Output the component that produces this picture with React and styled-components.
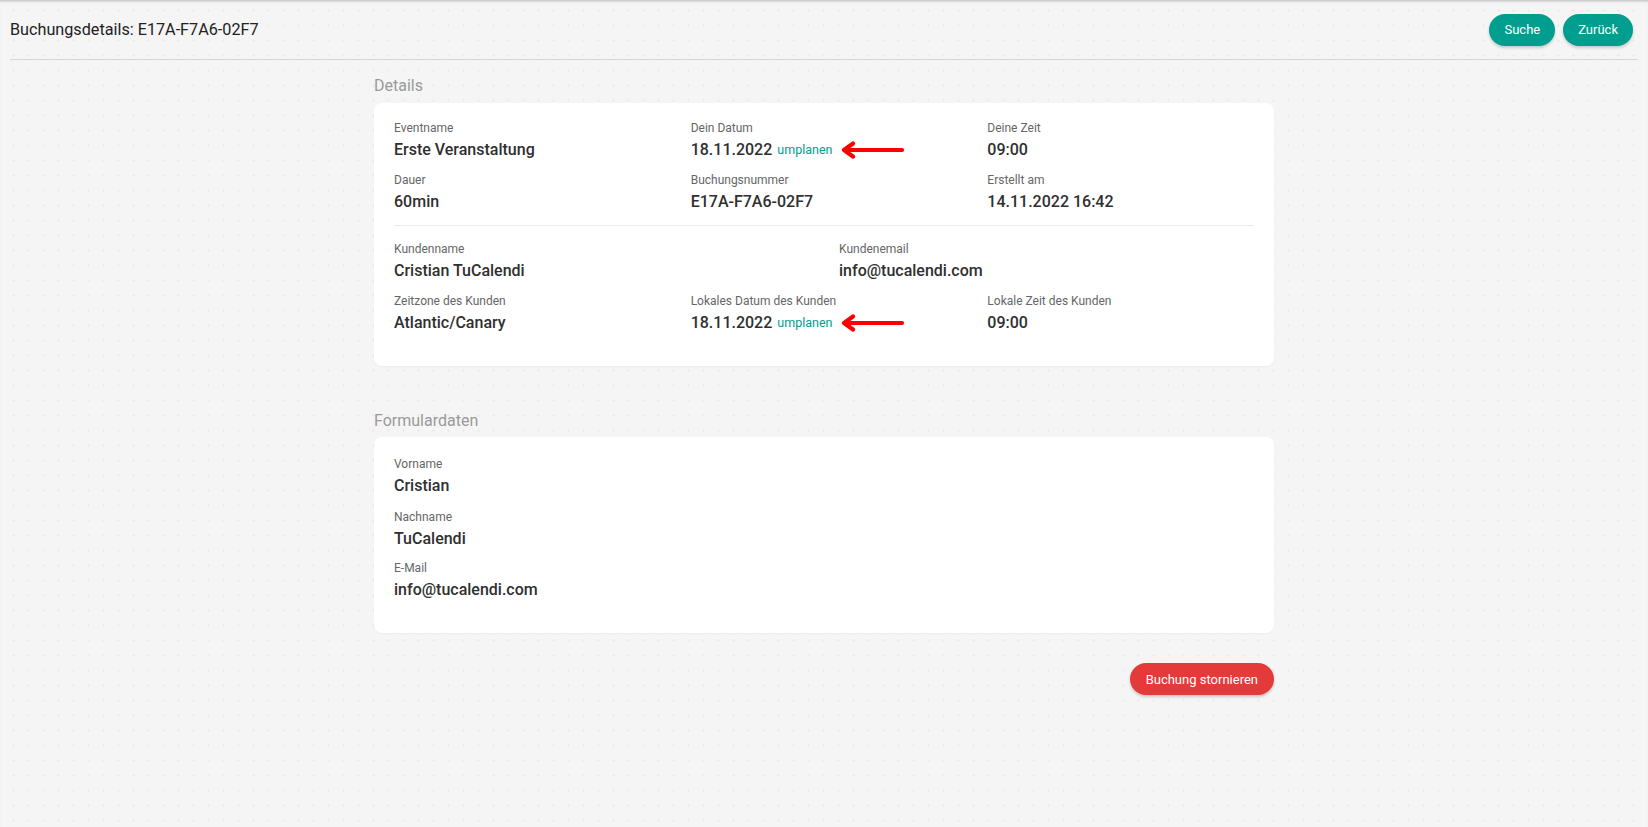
import React from "react";
import styled, { createGlobalStyle } from "styled-components";

const GlobalStyle = createGlobalStyle`
  html, body {
    margin: 0;
    padding: 0;
  }
  body {
    font-family: Roboto, "Liberation Sans", Arial, sans-serif;
    background-color: #f5f5f5;
    background-image: radial-gradient(circle, #ebebeb 1px, transparent 1.2px);
    background-size: 15px 15px;
    background-position: 6px 3px;
    color: #333;
    min-height: 827px;
  }
`;

const Page = styled.div`
  min-height: 827px;
  box-shadow: inset 0 3px 3px -2px rgba(0, 0, 0, 0.25);
  padding: 0 10px;
  box-sizing: border-box;
`;

const Header = styled.header`
  display: flex;
  justify-content: space-between;
  align-items: center;
  height: 60px;
  border-bottom: 1px solid #d6d6d6;
  box-sizing: border-box;
`;

const Title = styled.h1`
  margin: 0;
  font-size: 16.2px;
  font-weight: 400;
  color: #222;
`;

const Actions = styled.div`
  display: flex;
  gap: 8px;
  margin-right: 5px;
`;

const PillButton = styled.button`
  height: 32px;
  padding: 0 ${(p) => p.$px || 16}px;
  border: none;
  border-radius: 16px;
  background: ${(p) => p.$color || "#009e8e"};
  color: #fff;
  font-family: Roboto, "Liberation Sans", Arial, sans-serif;
  font-size: 13px;
  cursor: pointer;
  box-shadow: 0 2px 3px rgba(0, 0, 0, 0.18);
`;

const Main = styled.main`
  width: 900px;
  margin: 0 auto;
  padding-top: 16px;
`;

const SectionTitle = styled.h2`
  margin: ${(p) => p.$mt || 0}px 0 ${(p) => p.$mb || 10}px;
  font-size: 16px;
  font-weight: 400;
  color: #9a9a9a;
  line-height: 20px;
`;

const Card = styled.section`
  background: #fff;
  border-radius: 8px;
  padding: ${(p) => p.$pt || 17}px 20px ${(p) => p.$pb || 21}px;
  box-shadow: 0 1px 2px rgba(0, 0, 0, 0.04);
`;

const Row = styled.div`
  display: grid;
  grid-template-columns: repeat(${(p) => p.$cols || 3}, 1fr);
  margin: 0 -15px;
`;

const Field = styled.div`
  padding: 0 15px;
  margin-bottom: ${(p) => p.$mb ?? 12}px;
`;

const Label = styled.div`
  font-size: 12px;
  line-height: 16px;
  color: #666;
  margin-bottom: 3px;
`;

const Value = styled.div`
  display: flex;
  align-items: center;
  font-size: 16px;
  line-height: 21px;
  font-weight: 500;
  color: #2f2f2f;
`;

const Reschedule = styled.a`
  font-size: 12.5px;
  font-weight: 400;
  color: #009e8e;
  margin-left: 5px;
  text-decoration: none;
  cursor: pointer;
`;

const Arrow = styled.svg`
  margin-left: 9px;
  flex-shrink: 0;
`;

const Divider = styled.hr`
  border: none;
  border-top: 1px solid #ececec;
  margin: 1px 0 15px;
`;

const Footer = styled.div`
  display: flex;
  justify-content: flex-end;
  margin-top: 30px;
`;

const RedArrow = () => (
  <Arrow width="64" height="18" viewBox="0 0 64 18">
    <path
      d="M61 9 H4 M12 2.5 L3 9 L12 15.5"
      fill="none"
      stroke="#f00"
      strokeWidth="4.2"
      strokeLinecap="round"
      strokeLinejoin="round"
    />
  </Arrow>
);

const Item = ({ label, value, reschedule, mb }) => (
  <Field $mb={mb}>
    <Label>{label}</Label>
    <Value>
      {value}
      {reschedule && (
        <>
          <Reschedule>umplanen</Reschedule>
          <RedArrow />
        </>
      )}
    </Value>
  </Field>
);

export default function App() {
  return (
    <>
      <GlobalStyle />
      <Page>
        <Header>
          <Title>Buchungsdetails: E17A-F7A6-02F7</Title>
          <Actions>
            <PillButton $px={15}>Suche</PillButton>
            <PillButton $px={15}>Zurück</PillButton>
          </Actions>
        </Header>
        <Main>
          <SectionTitle $mb={7}>Details</SectionTitle>
          <Card>
            <Row>
              <Item label="Eventname" value="Erste Veranstaltung" />
              <Item label="Dein Datum" value="18.11.2022" reschedule />
              <Item label="Deine Zeit" value="09:00" />
              <Item label="Dauer" value="60min" />
              <Item label="Buchungsnummer" value="E17A-F7A6-02F7" />
              <Item label="Erstellt am" value="14.11.2022 16:42" />
            </Row>
            <Divider />
            <Row $cols={2}>
              <Item label="Kundenname" value="Cristian TuCalendi" />
              <Item label="Kundenemail" value="info@tucalendi.com" />
            </Row>
            <Row>
              <Item label="Zeitzone des Kunden" value="Atlantic/Canary" />
              <Item label="Lokales Datum des Kunden" value="18.11.2022" reschedule />
              <Item label="Lokale Zeit des Kunden" value="09:00" />
            </Row>
          </Card>
          <SectionTitle $mt={45} $mb={6}>Formulardaten</SectionTitle>
          <Card $pt={19}>
            <Row $cols={1}>
              <Item label="Vorname" value="Cristian" mb={13} />
              <Item label="Nachname" value="TuCalendi" mb={11} />
              <Item label="E-Mail" value="info@tucalendi.com" />
            </Row>
          </Card>
          <Footer>
            <PillButton $color="#e53a3a" $px={16}>Buchung stornieren</PillButton>
          </Footer>
        </Main>
      </Page>
    </>
  );
}
